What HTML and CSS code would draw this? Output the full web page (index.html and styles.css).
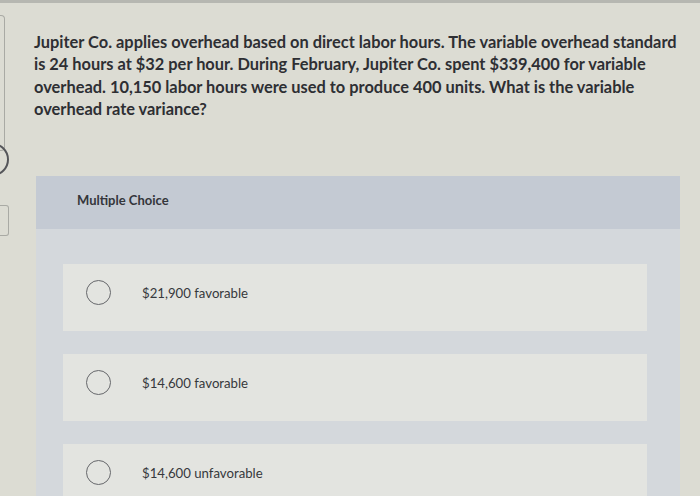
FILE: index.html
```html
<!DOCTYPE html>
<html>
<head>
<meta charset="utf-8">
<link rel="stylesheet" href="styles.css">
</head>
<body>
<div class="topbar"></div>
<div class="layout">
  <div class="rail">
    <div class="stub-tall"></div>
    <div class="stub-circle"></div>
    <div class="stub-box"></div>
  </div>
  <div class="main">
    <p class="question">Jupiter Co. applies overhead based on direct labor hours. The variable overhead standard is 24 hours at $32 per hour. During February, Jupiter Co. spent $339,400 for variable overhead. 10,150 labor hours were used to produce 400 units. What is the variable overhead rate variance?</p>
    <section class="panel">
      <div class="panel-head">Multiple Choice</div>
      <div class="panel-body">
        <label class="option"><span class="radio"></span><span class="opt-text">$21,900 favorable</span></label>
        <label class="option"><span class="radio"></span><span class="opt-text">$14,600 favorable</span></label>
        <label class="option"><span class="radio"></span><span class="opt-text">$14,600 unfavorable</span></label>
      </div>
    </section>
  </div>
</div>
</body>
</html>
```
FILE: styles.css
```css
html, body {
  margin: 0;
  padding: 0;
}
body {
  width: 700px;
  height: 496px;
  overflow: hidden;
  background: #dcdcd3;
  font-family: Lato, "Liberation Sans", sans-serif;
  color: #2f3033;
}
.topbar {
  height: 3px;
  background: #b6b7b1;
}
.layout {
  display: flex;
}
.rail {
  width: 36px;
  flex: none;
  display: flex;
  flex-direction: column;
}
.stub-tall {
  margin-top: 12px;
  width: 4px;
  height: 134px;
  border: 1px solid #a9aaa4;
  border-left: none;
  border-radius: 0 4px 4px 0;
}
.stub-circle {
  margin-top: -8px;
  margin-left: -24px;
  width: 29px;
  height: 29px;
  border: 2px solid #55565a;
  border-radius: 50%;
}
.stub-box {
  margin-top: 29px;
  width: 8px;
  height: 29px;
  border: 1px solid #a9aaa4;
  border-left: none;
  border-radius: 0 3px 3px 0;
}
.main {
  flex: 1;
  margin-right: 20px;
}
.question {
  margin: 28px 0 0 -2px;
  max-width: 648px;
  font-size: 16.4px;
  font-weight: 700;
  line-height: 22.3px;
  color: #2e2f33;
}
.panel {
  margin-top: 56px;
  background: #d4d8dc;
}
.panel-head {
  height: 48px;
  display: flex;
  align-items: center;
  padding-left: 41px;
  padding-bottom: 5px;
  background: #c4cad3;
  font-size: 13px;
  font-weight: 700;
  color: #34363b;
}
.panel-body {
  display: flex;
  flex-direction: column;
  gap: 23px;
  padding: 35px 33px 40px 27px;
}
.option {
  height: 67px;
  box-sizing: border-box;
  padding-top: 16px;
  display: flex;
  align-items: flex-start;
  background: #e3e4e0;
}
.radio {
  width: 23px;
  height: 23px;
  margin-left: 23px;
  border: 1.5px solid #66676b;
  border-radius: 50%;
  flex: none;
}
.opt-text {
  margin-left: 31px;
  margin-top: 5px;
  font-size: 13.2px;
  color: #36383c;
}
```
